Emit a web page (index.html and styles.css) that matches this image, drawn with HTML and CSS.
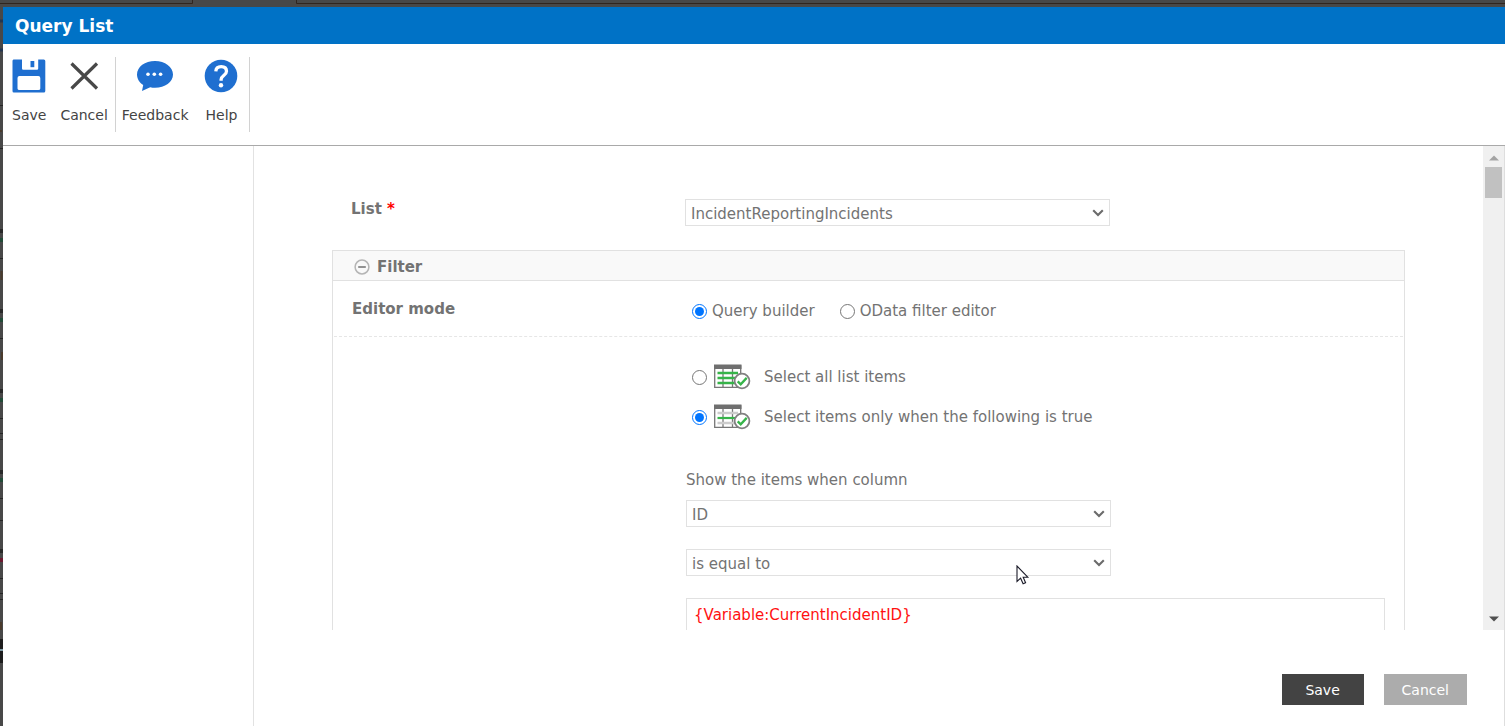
FILE: index.html
```html
<!DOCTYPE html>
<html lang="en">
<head>
<meta charset="utf-8">
<title>Query List</title>
<link rel="stylesheet" href="styles.css">
</head>
<body>
<svg class="defs" aria-hidden="true">
  <symbol id="chevron" viewBox="0 0 12 8"><path d="M1.200 1.300 6 6l4.800-4.700" fill="none" stroke="#6b6b6b" stroke-width="2.100"/></symbol>
</svg>
<div class="backdrop">
  <svg class="behind-top" aria-hidden="true"><path d="M0 3.500H192.500V0M296.500 0V3.500H1505" fill="none" stroke="#30251f"/></svg>
  <svg class="behind-left" aria-hidden="true">
    <path d="M0 21h3M0 50h3" stroke="#24364f" stroke-width="3"/>
    <path d="M0 231h3M0 311h3M0 391h3M0 472h3M0 551h3" stroke="#292929" stroke-width="4"/>
    <path d="M0 240h3M0 320h3M0 400h3M0 480h3" stroke="#214b38" stroke-width="4"/>
    <path d="M0 560h3" stroke="#6b1930" stroke-width="4"/>
    <path d="M0 105.500h3M0 148.500h3M0 258.500h3M0 338.500h3M0 418.500h3M0 433.500h3M0 439.500h3M0 498.500h3M0 520.500h3M0 578.500h3M0 593.500h3M0 599.500h3" stroke="#262626"/>
    <path d="M0 639h3v24H0z" fill="#1d1d1d"/><path d="M0 650h3" stroke="#7c98a3" stroke-width="2"/>
    <path d="M0 131h2M1.500 271v9M2 352v8M1 622v8" stroke="#4a3b2c" stroke-width="2"/>
  </svg>
  <div class="dialog" role="dialog" aria-labelledby="title">
    <header class="titlebar"><h1 id="title">Query List</h1></header>
    <div class="ribbon">
      <div class="ribbon-group">
        <button class="tool" type="button">
          <svg width="34" height="34" viewBox="0 0 34 34"><path fill="#1f6fd0" fill-rule="evenodd" d="M1.500.5H10v9q0 1.200 1.200 1.200H25q1.200 0 1.200-1.200v-9h5.600q1.500 0 1.500 1.500v30q0 1.500-1.500 1.500h-30Q.5 33.500.5 32V2Q.5.5 1.500.5zM7.500 17q-2 0-2 2v10.500q0 1.500 2 1.500h18.800q2 0 2-1.500V19q0-2-2-2z"/><path fill="#1f6fd0" d="M18.500 2h3.800v6.200h-3.800z"/></svg>
          <span>Save</span>
        </button>
        <button class="tool" type="button">
          <svg width="34" height="34" viewBox="0 0 34 34"><path d="m4.500 4.500 25.500 25M30 4.500l-25.500 25" fill="none" stroke="#484848" stroke-width="3.200"/></svg>
          <span>Cancel</span>
        </button>
      </div>
      <div class="ribbon-group">
        <button class="tool" type="button">
          <svg width="38" height="34" viewBox="0 0 38 34"><path fill="#1f6fd0" d="M19 2C9 2 1 7.800 1 15.500c0 4.300 2.400 8 6.200 10.500L6 32l8.200-3.800c1.500.4 3.200.6 4.800.6 10 0 18-6 18-13.300S29 2 19 2z"/><g fill="#fff"><circle cx="12" cy="15.300" r="1.800"/><circle cx="18.300" cy="15.300" r="1.800"/><circle cx="24.600" cy="15.300" r="1.800"/></g></svg>
          <span>Feedback</span>
        </button>
        <button class="tool" type="button">
          <svg width="34" height="34" viewBox="0 0 34 34"><circle cx="17" cy="17" r="16.300" fill="#1f6fd0"/><path d="M11.800 12.300C12 9 14 7.600 17.200 7.600s5.300 1.700 5.300 4.600c0 4.300-5.400 4.300-5.400 8.300v1.300" fill="none" stroke="#fff" stroke-width="3.300"/><circle cx="17" cy="26.200" r="2.200" fill="#fff"/></svg>
          <span>Help</span>
        </button>
      </div>
    </div>
    <div class="workspace">
      <aside class="side"></aside>
      <main class="main">
        <div class="scroller">
          <form class="form">
            <div class="row list-row">
              <label class="caption" for="list">List <span class="required">*</span></label>
              <div class="select"><select id="list"><option>IncidentReportingIncidents</option></select><svg><use href="#chevron"/></svg></div>
            </div>
            <section class="panel">
              <h2 class="panel-head"><button type="button" class="toggle"><svg width="16" height="16" viewBox="0 0 16 16"><circle cx="8" cy="8" r="6.900" fill="none" stroke="#b5b5b5" stroke-width="1.500"/><path d="M4.200 8h7.600" stroke="#929292" stroke-width="2"/></svg>Filter</button></h2>
              <div class="row mode-row">
                <span class="caption" id="mode">Editor mode</span>
                <div class="modes" role="radiogroup" aria-labelledby="mode">
                  <label class="choice"><input type="radio" name="mode" checked>Query builder</label>
                  <label class="choice"><input type="radio" name="mode">OData filter editor</label>
                </div>
              </div>
              <div class="row builder">
                <div class="fields">
                  <label class="choice scope"><input type="radio" name="scope">
                    <svg width="38" height="28" viewBox="0 0 38 28"><path d="M1.700 3h26v21.300h-26zM10 5v20M19.500 5v20" fill="#fff" stroke="#777" stroke-width="1.300"/><path d="M1 1.500h27.500V6H1z" fill="#6f6f6f"/><path d="M4.500 10h20.500M4.500 15h20M4.500 20h20" stroke="#36b449" stroke-width="2.400"/><circle cx="29" cy="18" r="7.400" fill="#fff" stroke="#818181" stroke-width="1.800"/><path d="m24.700 18.400 3 3 6-6.500" fill="none" stroke="#36b449" stroke-width="2.300"/></svg>
                    Select all list items</label>
                  <label class="choice scope"><input type="radio" name="scope" checked>
                    <svg width="38" height="28" viewBox="0 0 38 28"><path d="M1.700 3h26v21.300h-26zM10 5v20M19.500 5v20" fill="#fff" stroke="#777" stroke-width="1.300"/><path d="M1 1.500h27.500V6H1z" fill="#6f6f6f"/><path d="M4.500 10h20.500M4.500 20h20" stroke="#ccc" stroke-width="2.400"/><path d="M4.500 15h20" stroke="#36b449" stroke-width="2.200"/><circle cx="29" cy="18" r="7.400" fill="#fff" stroke="#818181" stroke-width="1.800"/><path d="m24.700 18.400 3 3 6-6.500" fill="none" stroke="#36b449" stroke-width="2.300"/></svg>
                    Select items only when the following is true</label>
                  <label class="hint" for="column">Show the items when column</label>
                  <div class="select"><select id="column"><option>ID</option></select><svg><use href="#chevron"/></svg></div>
                  <div class="select"><select aria-label="Operator"><option>is equal to</option></select><svg><use href="#chevron"/></svg></div>
                  <textarea class="value" aria-label="Value" spellcheck="false">{Variable:CurrentIncidentID}</textarea>
                </div>
              </div>
            </section>
          </form>
          <div class="scrollbar" aria-hidden="true">
            <svg width="10" height="6"><path d="M0 5.500 5 .5l5 5z" fill="#a3a3a3"/></svg>
            <div class="thumb"></div>
            <svg width="10" height="6"><path d="M0 .5h10l-5 5z" fill="#505050"/></svg>
          </div>
        </div>
        <footer class="actions">
          <button class="btn save" type="button">Save</button>
          <button class="btn cancel" type="button">Cancel</button>
        </footer>
      </main>
    </div>
  </div>
  <svg class="pointer" width="14" height="21" viewBox="0 0 14 21" aria-hidden="true"><path d="M1 1v15.500l3.600-3.300 2.500 5.600 2.500-1.100-2.400-5.500h4.600z" fill="#fff" stroke="#1a1a28" stroke-width="1.100"/></svg>
</div>
</body>
</html>
```
FILE: styles.css
```css
* { box-sizing: border-box; }
body {
  margin: 0;
  font: 15px/20px Verdana, "DejaVu Sans", sans-serif;
  color: #737373;
}
button, select, textarea, input { font: inherit; color: inherit; margin: 0; }
.defs { display: none; }
.backdrop {
  position: relative;
  height: 100vh;
  padding: 7px 0 0 3px;
  background: #484848;
  overflow: hidden;
}
.behind-top { position: absolute; top: 0; left: 0; width: 100%; height: 7px; }
.behind-left { position: absolute; top: 0; left: 0; width: 3px; height: 100%; }
.dialog {
  position: relative;
  display: flex;
  flex-direction: column;
  height: 100%;
  background: #fff;
}
.titlebar { padding: 7px 12px 6px; background: #0072c6; color: #fff; }
.titlebar h1 { margin: 0; font-size: 17px; line-height: 24px; font-weight: bold; }
.ribbon { display: flex; padding: 13px 0; border-bottom: 1px solid #a9a9a9; }
.ribbon-group {
  display: flex;
  gap: 14px;
  height: 75px;
  padding: 0 7px 0 9px;
  border-right: 1px solid #d2d2d2;
}
.ribbon-group + .ribbon-group { gap: 16px; padding: 0 11px 0 6px; }
.tool {
  display: flex;
  flex-direction: column;
  align-items: center;
  gap: 12px;
  padding: 2px 0 0;
  border: 0;
  background: none;
  color: #444;
  font-size: 14px;
}
.workspace { flex: 1; display: flex; min-height: 0; border-right: 1px solid #dedede; }
.side { width: 251px; border-right: 1px solid #e2e2e2; }
.main { flex: 1; display: flex; flex-direction: column; min-width: 0; }
.scroller { flex: 1; display: flex; min-height: 0; overflow: hidden; }
.form { flex: 1; padding: 53px 78px 0; }
.row { display: grid; grid-template-columns: 353px 1fr; }
.caption { padding-left: 19px; font-weight: bold; }
.required { color: #f00; }
.list-row { margin-bottom: 24px; }
.select { position: relative; width: 425px; height: 27px; }
.select select {
  appearance: none;
  display: block;
  width: 100%;
  height: 100%;
  padding: 2px 24px 0 5px;
  border: 1px solid #e1e1e1;
  border-radius: 0;
  background: #fff;
}
.select svg { position: absolute; right: 6px; top: 10px; width: 12px; height: 8px; pointer-events: none; }
.panel { border: 1px solid #e1e1e1; height: 480px; }
.panel-head {
  margin: 0;
  padding: 6px 21px 3px;
  background: #f9f9f9;
  border-bottom: 1px solid #e1e1e1;
  line-height: 20px;
}
.toggle {
  display: flex;
  align-items: center;
  gap: 7px;
  padding: 0;
  border: 0;
  background: none;
  font-size: 15px;
  font-weight: bold;
}
.mode-row { padding: 18px 0 15px; margin: 0 1px; border-bottom: 1px dashed #e6e6e6; }
.mode-row .caption { padding-left: 18px; }
.modes { display: flex; gap: 25px; padding: 2px 0 0 5px; }
.choice { display: flex; align-items: center; }
.choice input { width: 15px; height: 15px; margin-right: 5px; accent-color: #0075ff; }
.fields { grid-column: 2; display: flex; flex-direction: column; padding: 26px 19px 0 0; }
.scope { height: 28px; margin: 0 0 12px 6px; }
.scope svg { margin: 0 13px 0 1px; }
.hint { margin: 27px 0 10px; }
.fields .select { margin-bottom: 22px; }
.value {
  display: block;
  width: 100%;
  height: 80px;
  padding: 6px 7px;
  border: 1px solid #e1e1e1;
  color: #f11;
  resize: none;
  overflow: hidden;
}
.scrollbar {
  display: flex;
  flex-direction: column;
  align-items: center;
  width: 21px;
  padding: 9px 0 8px;
  background: #f0f0f0;
}
.thumb { width: 17px; height: 31px; margin: 6px 0 auto; background: #c1c1c1; }
.actions { display: flex; justify-content: flex-end; gap: 20px; padding: 44px 37px 21px; }
.btn { min-width: 82px; padding: 6px 18px 5px; border: 0; color: #fff; font-size: 14px; }
.save { background: #434343; }
.cancel { background: #acacac; }
.pointer { position: absolute; left: 1016px; top: 565px; }
```
